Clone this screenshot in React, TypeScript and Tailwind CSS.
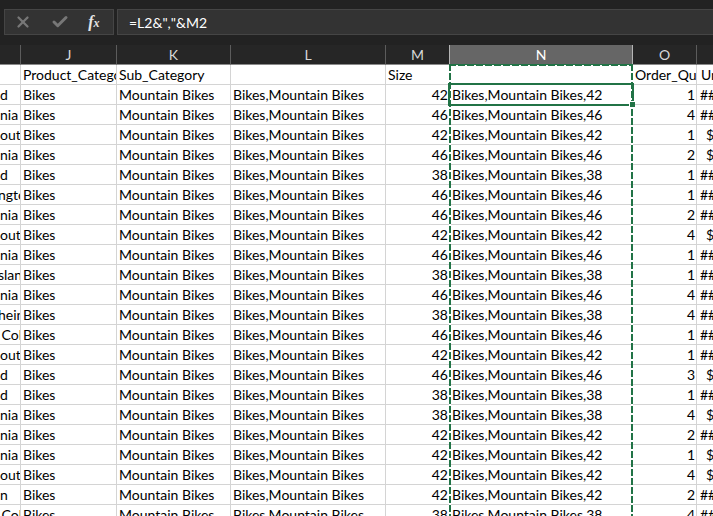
import { Check, X } from 'lucide-react';

type Row = [region: string, size: number, quantity: number, price: string];

const rows: Row[] = [
  ['d', 42, 1, '##'],
  ['nia', 46, 4, '##'],
  ['out', 42, 1, '$'],
  ['nia', 46, 2, '$'],
  ['d', 38, 1, '##'],
  ['ngto', 46, 1, '##'],
  ['nia', 46, 2, '##'],
  ['out', 42, 4, '$'],
  ['nia', 46, 1, '##'],
  ['slan', 38, 1, '##'],
  ['nia', 46, 4, '##'],
  ['hein', 38, 4, '##'],
  ['\u00a0Col', 46, 1, '##'],
  ['out', 42, 1, '##'],
  ['d', 46, 3, '$'],
  ['d', 38, 1, '##'],
  ['nia', 38, 4, '$'],
  ['nia', 42, 2, '##'],
  ['nia', 42, 1, '$'],
  ['out', 42, 4, '$'],
  ['n', 42, 2, '##'],
  ['\u00a0Col', 38, 4, '##'],
];

const cell = 'h-5 overflow-hidden border-r border-b border-[#d4d4d4] p-0 leading-[19px] last:border-r-0';
const textCell = `${cell} pl-0.5`;
const numberCell = `${cell} pr-px text-right`;
const verticalDashes =
  'absolute top-0 bottom-0 w-0.5 bg-[repeating-linear-gradient(to_bottom,#217346_0px,#217346_7px,#ffffff_7px,#ffffff_9px)]';

function FormulaBar() {
  return (
    <header className="flex h-[45px] gap-[3px] bg-[#222222] pt-[9px] pl-1">
      <div className="flex h-[26px] w-[110px] items-center justify-around border border-[#454545] bg-[#333333] pr-1 text-[#777777]">
        <button type="button" aria-label="Cancel"><X size={18} strokeWidth={3} /></button>
        <button type="button" aria-label="Enter"><Check size={18} strokeWidth={4} /></button>
        <button type="button" aria-label="Insert function" className="font-['Liberation_Serif',serif] text-[16px] leading-5 font-bold text-[#e4e4e4] italic">
          f<span className="text-[12px]">x</span>
        </button>
      </div>
      <input
        aria-label="Formula"
        defaultValue={'=L2&","&M2'}
        className="h-[26px] min-w-0 flex-1 border border-r-0 border-[#454545] bg-[#333333] pl-[11px] text-[14px] text-white outline-none [font-kerning:none]"
      />
    </header>
  );
}

/* Dashed copy outline round column N, with the active cell N2 and its fill handle. */
function ColumnSelection() {
  return (
    <div aria-hidden="true" className="pointer-events-none absolute top-[19px] bottom-0 left-[449px] w-[184px]">
      <div className={`${verticalDashes} left-0`} />
      <div className={`${verticalDashes} right-0`} />
      <div className="absolute inset-x-0 top-0 h-px bg-[#217346]" />
      <div className="absolute inset-x-0 top-px h-px bg-[repeating-linear-gradient(to_right,#217346_0px,#217346_7px,#ffffff_7px,#ffffff_9px)]" />
      <div className="absolute top-[19px] -right-px -left-px h-[23px] border-2 border-[#217346]">
        <div className="absolute -right-[3px] -bottom-[3px] size-[6px] border-t border-l border-white bg-[#217346]" />
      </div>
    </div>
  );
}

export default function App() {
  return (
    <div className="flex h-screen flex-col overflow-hidden bg-white font-['Lato',sans-serif] text-[14px] text-black">
      <FormulaBar />
      <main className="relative min-h-0 flex-1 overflow-hidden">
        <table className="w-full table-fixed border-separate border-spacing-0 whitespace-nowrap">
          <colgroup>
            <col className="w-[21px]" />
            <col className="w-24" />
            <col className="w-[114px]" />
            <col className="w-[155px]" />
            <col className="w-16" />
            <col className="w-[183px]" />
            <col className="w-16" />
            <col />
          </colgroup>
          <thead>
            <tr className="bg-[#262626] text-[#d8d8d8]">
              {['', 'J', 'K', 'L', 'M', 'N', 'O', ''].map((letter, i) => (
                <th
                  key={i}
                  scope="col"
                  className={`h-5 border-r border-b border-b-[#8a8a8a] p-0 leading-[19px] font-normal last:border-r-0 ${letter === 'N' ? 'bg-[#666666] text-white' : ''} ${letter === 'M' || letter === 'N' ? 'border-r-[#b5b5b5]' : 'border-r-[#5c5c5c]'}`}
                >
                  {letter}
                </th>
              ))}
            </tr>
          </thead>
          <tbody>
            <tr>
              <td className={cell} />
              <td className={textCell}>Product_Category</td>
              <td className={textCell}>Sub_Category</td>
              <td className={cell} />
              <td className={textCell}>Size</td>
              <td className={cell} />
              <td className={textCell}>Order_Qu</td>
              <td className={`${cell} pl-1`}>Un</td>
            </tr>
            {rows.map(([region, size, quantity, price], i) => (
              <tr key={i}>
                <td className={`${cell} ${region.length > 3 ? '-indent-0.5' : ''}`}>{region}</td>
                <td className={textCell}>Bikes</td>
                <td className={textCell}>Mountain Bikes</td>
                <td className={textCell}>Bikes,Mountain Bikes</td>
                <td className={numberCell}>{size}</td>
                <td className={textCell}>Bikes,Mountain Bikes,{size}</td>
                <td className={numberCell}>{quantity}</td>
                <td className={`${cell} ${price === '$' ? 'pl-[9px]' : 'pl-[3px]'}`}>{price}</td>
              </tr>
            ))}
          </tbody>
        </table>
        <ColumnSelection />
      </main>
    </div>
  );
}
